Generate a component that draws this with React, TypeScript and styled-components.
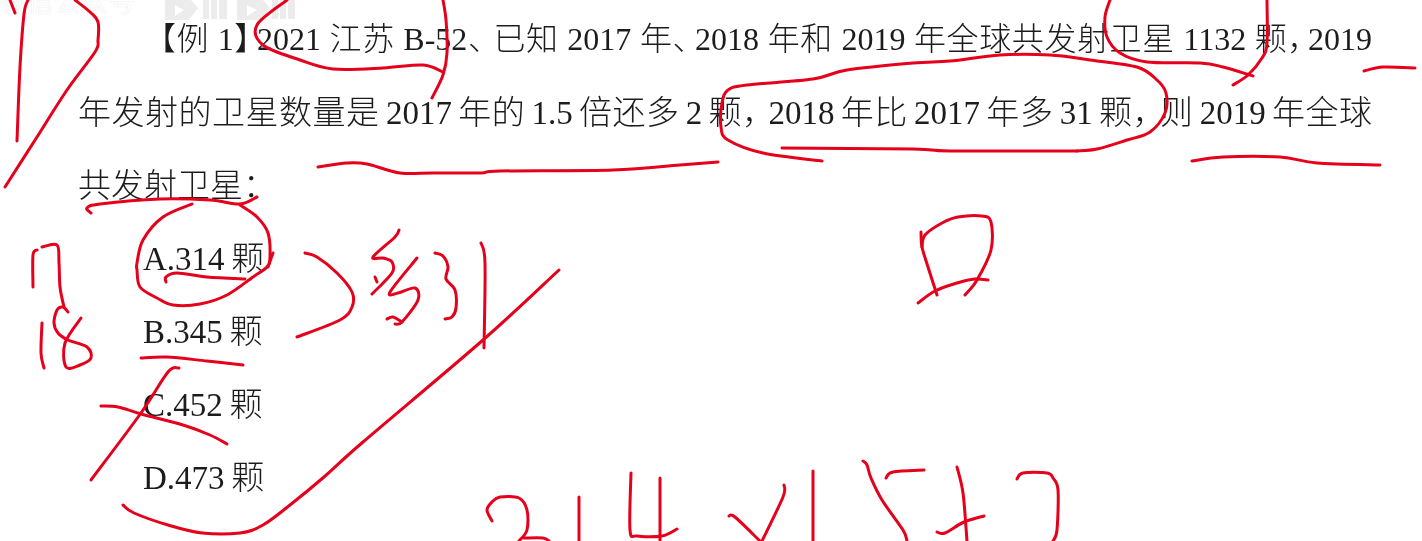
import styled, { createGlobalStyle } from "styled-components";

const GlobalStyle = createGlobalStyle`
  html, body {
    margin: 0;
    background: #fff;
  }
`;

// hand-drawn pen strokes, traced as x,y pairs
const strokes: number[][] = [
  [10, 0, 15, 13],
  [28, 0, 24, 14, 20, 67, 17, 141],
  [75, 0, 90, 12, 98, 22, 98, 40, 95, 52, 67, 90, 37, 137, 5, 187],
  [287, 0, 257, 25, 263, 45, 300, 60, 333, 69, 383, 68, 423, 65, 443, 72],
  [443, 0, 446, 20, 447, 53, 443, 75, 432, 98],
  [318, 167, 347, 163, 367, 164, 400, 173, 433, 173, 480, 173, 500, 171, 613, 170, 680, 165, 718, 162],
  [1077, 151, 950, 151, 913, 149, 782, 148],
  [822, 161, 763, 153, 728, 140, 721, 127, 722, 103, 728, 90, 747, 85, 813, 79, 847, 70, 913, 63, 950, 61, 1000, 55, 1050, 55, 1090, 60, 1137, 67, 1157, 80, 1166, 93, 1165, 113, 1150, 132, 1127, 140, 1097, 149, 1077, 151],
  [1110, 0, 1105, 17, 1107, 37, 1120, 53, 1147, 62, 1200, 63, 1223, 67, 1253, 76],
  [1267, 0, 1267, 43, 1262, 58, 1248, 75, 1233, 85],
  [1364, 71, 1383, 67, 1415, 68],
  [1192, 161, 1223, 157, 1280, 157, 1317, 163, 1380, 165],
  [91, 213, 87, 208, 100, 204, 160, 199, 210, 200, 240, 204, 257, 197],
  [240, 205, 257, 217, 268, 233, 270, 257, 267, 267, 253, 277, 227, 295, 200, 304, 173, 305, 157, 298, 140, 287, 137, 270, 137, 263, 143, 240, 163, 217, 192, 204],
  [273, 253, 268, 267],
  [166, 282, 166, 277, 177, 273, 207, 277, 245, 279],
  [33, 287, 33, 255, 37, 250],
  [42, 247, 57, 245, 59, 263, 60, 287, 64, 307],
  [42, 323, 41, 353, 44, 368],
  [68, 312, 63, 307, 57, 310, 54, 323, 58, 333, 68, 340, 87, 347, 91, 358, 80, 365, 66, 367, 65, 343, 81, 318],
  [141, 358, 167, 357, 207, 361, 243, 365],
  [179, 368, 168, 372, 141, 413, 91, 480],
  [101, 406, 118, 407, 141, 414, 183, 425, 210, 435, 227, 444],
  [559, 270, 483, 340, 363, 442, 324, 477, 290, 505, 263, 525, 240, 533, 202, 533, 168, 525, 134, 513, 123, 505],
  [481, 243, 485, 263, 484, 348],
  [305, 253, 317, 257, 337, 273, 352, 292, 352, 307, 340, 320, 297, 337],
  [399, 230, 395, 237, 373, 257, 383, 258, 392, 262, 392, 273, 372, 294],
  [375, 277, 377, 282],
  [417, 258, 390, 292, 398, 293, 415, 288, 418, 300, 402, 322, 395, 324],
  [402, 322, 393, 317, 387, 319],
  [435, 253, 443, 256, 448, 267, 446, 279, 455, 290, 456, 308, 452, 317, 445, 319],
  [921, 232, 922, 247, 928, 267, 937, 295],
  [922, 247, 925, 235, 942, 223, 958, 217, 982, 216, 991, 222, 991, 250, 977, 280, 965, 295],
  [918, 303, 935, 291, 957, 283, 975, 279, 988, 280],
  [492, 521, 487, 510, 492, 502, 500, 497, 519, 498, 527, 510, 527, 530, 519, 541],
  [524, 538, 543, 538, 549, 541],
  [579, 497, 579, 541],
  [631, 473, 630, 530, 637, 536, 662, 536, 677, 529],
  [660, 478, 660, 541],
  [729, 516, 735, 517, 760, 541],
  [784, 485, 783, 497, 762, 541],
  [813, 471, 813, 541],
  [863, 461, 867, 465, 871, 478, 882, 500, 903, 530, 907, 541],
  [886, 478, 893, 472, 924, 470],
  [957, 467, 963, 493, 967, 541],
  [937, 532, 945, 533, 964, 522, 984, 516],
  [1017, 479, 1023, 473, 1047, 473, 1053, 478, 1058, 490, 1057, 530, 1053, 541],
];

// catmull-rom through the traced points so the pen lines don't look faceted
function toPath(p: number[]) {
  const pts: [number, number][] = [];
  for (let i = 0; i < p.length; i += 2) pts.push([p[i], p[i + 1]]);
  let d = `M${pts[0][0]} ${pts[0][1]}`;
  for (let i = 0; i < pts.length - 1; i++) {
    const a = pts[Math.max(i - 1, 0)];
    const b = pts[i];
    const c = pts[i + 1];
    const e = pts[Math.min(i + 2, pts.length - 1)];
    const c1x = b[0] + (c[0] - a[0]) / 6;
    const c1y = b[1] + (c[1] - a[1]) / 6;
    const c2x = c[0] - (e[0] - b[0]) / 6;
    const c2y = c[1] - (e[1] - b[1]) / 6;
    d += `C${c1x.toFixed(1)} ${c1y.toFixed(1)} ${c2x.toFixed(1)} ${c2y.toFixed(1)} ${c[0]} ${c[1]}`;
  }
  return d;
}

const options = ["A.314 颗", "B.345 颗", "C.452 颗", "D.473 颗"];

export default function App() {
  return (
    <Page lang="zh-CN">
      <GlobalStyle />
      <Sheet>
        <Stem>
          <FirstLine $size={32}>
            【例 1<Punct $trim={10}>】</Punct>2021 江苏 B-52<Punct $trim={7}>、</Punct>已知 2017 年<Punct $trim={10}>、</Punct>2018 年和 2019 年全球共发射卫星 1132 颗<Punct $trim={12}>，</Punct>2019
          </FirstLine>
          <StemLine $size={33}>
            年发射的卫星数量是 2017 年的 1.5 倍还多 2 颗<Punct $trim={7}>，</Punct>2018 年比 2017 年多 31 颗<Punct $trim={6}>，</Punct>则 2019 年全球
          </StemLine>
          <LastLine>共发射卫星：</LastLine>
        </Stem>
        <Options>
          {options.map((o) => (
            <Option key={o}>{o}</Option>
          ))}
        </Options>
      </Sheet>

      <Watermark>
        <WatermarkText>微信公众号</WatermarkText>
        <WatermarkLogo width="134" height="20" viewBox="0 0 134 20">
          <path d="M0 0H26L33 8L24 20H0ZM10 5V16L19 10Z" fillRule="evenodd" />
          <path d="M38 0H44V19H38ZM46 0H52V19H46ZM54 0H62V19H54Z" />
          <path d="M72 0H98L105 8L96 20H72ZM82 5V16L92 10Z" fillRule="evenodd" />
          <path d="M107 0H113V19H107ZM115 0H121V19H115ZM123 0H130V19H123Z" />
        </WatermarkLogo>
      </Watermark>

      <Ink viewBox="0 0 1422 541" width="1422" height="541">
        {strokes.map((s, i) => (
          <path key={i} d={toPath(s)} />
        ))}
      </Ink>
    </Page>
  );
}

const Page = styled.div`
  position: relative;
  width: 1422px;
  height: 541px;
  overflow: hidden;
  background: #fff;
  color: #1c1c1c;
  font-family: "Liberation Serif", "Noto Sans CJK SC", serif;
  font-size: 33px;
  font-weight: 300;
  line-height: 73px;
`;

const Sheet = styled.div`
  display: flex;
  flex-direction: column;
  padding: 4px 50px 0 78px;
  filter: blur(0.45px);
`;

const Stem = styled.div`
  display: flex;
  flex-direction: column;
`;

const StemLine = styled.div<{ $size: number }>`
  font-size: ${(p) => p.$size}px;
  word-spacing: -2.5px;
  white-space: nowrap;
  text-align: justify;
  text-align-last: justify;
  text-justify: inter-word;
`;

const FirstLine = styled(StemLine)`
  margin: -1px 0 1px 66px;
  word-spacing: 0;
`;

// the scan sets some punctuation narrower than a full em
const Punct = styled.span<{ $trim: number }>`
  letter-spacing: -${(p) => p.$trim}px;
`;

const LastLine = styled.div`
  white-space: nowrap;
`;

const Options = styled.div`
  display: flex;
  flex-direction: column;
  padding-left: 65px;
  word-spacing: -1.5px;
`;

const Option = styled.div`
  white-space: nowrap;
`;

const Watermark = styled.div`
  position: absolute;
  top: 0;
  left: 0;
  display: flex;
  align-items: flex-start;
  gap: 24px;
  height: 22px;
  overflow: hidden;
  filter: blur(0.7px);
`;

const WatermarkText = styled.div`
  width: 141px;
  margin-top: -16px;
  font-family: "Noto Sans CJK SC", sans-serif;
  font-size: 27px;
  line-height: 34px;
  color: #fff;
  text-shadow: 0 0 2px #dcdcdc;
  white-space: nowrap;
`;

const WatermarkLogo = styled.svg`
  fill: #ececec;
`;

const Ink = styled.svg`
  position: absolute;
  top: 0;
  left: 0;
  filter: blur(0.35px);
  path {
    fill: none;
    stroke: #e5001c;
    stroke-width: 3;
    stroke-linecap: round;
    stroke-linejoin: round;
  }
`;
